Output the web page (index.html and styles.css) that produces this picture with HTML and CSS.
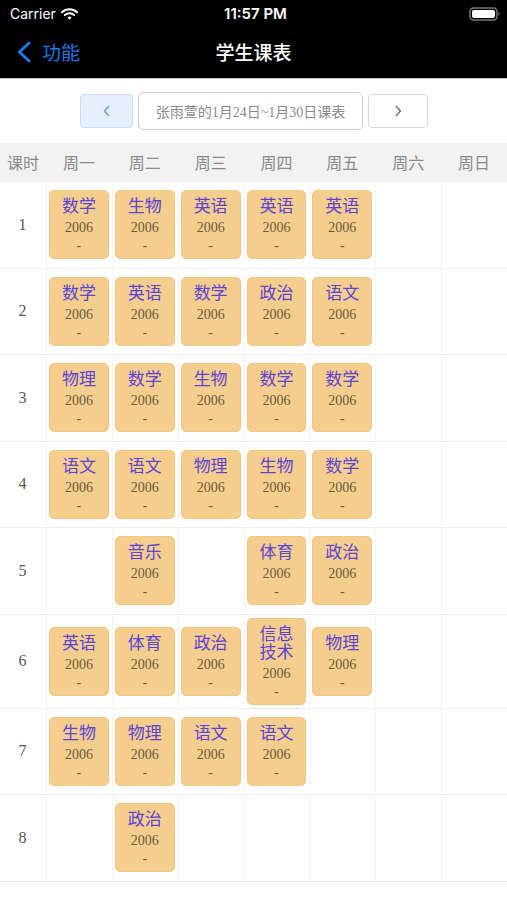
FILE: index.html
```html
<!DOCTYPE html>
<html lang="zh">
<head>
<meta charset="utf-8">
<title>学生课表</title>
<link rel="stylesheet" href="styles.css">
</head>
<body>
<div class="topbar">
  <div class="status">
    <div class="status-left">Carrier
      <svg class="wifi" width="17" height="12" viewBox="0 0 17 12"><path d="M1 4.2 A11 11 0 0 1 16 4.2" fill="none" stroke="#fff" stroke-width="2" stroke-linecap="round"/><path d="M3.8 7 A7 7 0 0 1 13.2 7" fill="none" stroke="#fff" stroke-width="2" stroke-linecap="round"/><path d="M6.4 9.6 L8.5 11.8 L10.6 9.6 A3 3 0 0 0 6.4 9.6 Z" fill="#fff"/></svg>
    </div>
    <div class="status-time">11:57 PM</div>
    <div class="status-right">
      <svg width="32" height="14" viewBox="0 0 32 14"><rect x="1" y="1" width="27" height="12" rx="3.5" fill="none" stroke="#777" stroke-width="1.5"/><rect x="3" y="3" width="23" height="8" rx="2" fill="#fff"/><path d="M29.5 5 L31 7 L29.5 9 Z" fill="#777"/></svg>
    </div>
  </div>
  <div class="navbar">
    <div class="nav-back">
      <svg width="16" height="22" viewBox="0 0 16 22"><path d="M13 2 L3.5 11 L13 20" fill="none" stroke="#1a7ae6" stroke-width="3" stroke-linecap="round" stroke-linejoin="round"/></svg>
      <span>功能</span>
    </div>
    <div class="nav-title">学生课表</div>
  </div>
</div>

<div class="week-bar">
  <div class="week-btn prev">
    <svg width="8" height="12" viewBox="0 0 8 12"><path d="M6 1 L1.5 6 L6 11" fill="none" stroke="#5a98dc" stroke-width="1.2"/></svg>
  </div>
  <div class="week-label">张雨萱的1月24日~1月30日课表</div>
  <div class="week-btn next">
    <svg width="8" height="12" viewBox="0 0 8 12"><path d="M2 1 L6.5 6 L2 11" fill="none" stroke="#666" stroke-width="1.2"/></svg>
  </div>
</div>

<div class="timetable">
  <div class="th">课时</div><div class="th">周一</div><div class="th">周二</div><div class="th">周三</div><div class="th">周四</div><div class="th">周五</div><div class="th">周六</div><div class="th">周日</div>

  <div class="td num">1</div>
  <div class="td"><div class="card"><div class="subj">数学</div><div class="room">2006</div><div class="dash">-</div></div></div>
  <div class="td"><div class="card"><div class="subj">生物</div><div class="room">2006</div><div class="dash">-</div></div></div>
  <div class="td"><div class="card"><div class="subj">英语</div><div class="room">2006</div><div class="dash">-</div></div></div>
  <div class="td"><div class="card"><div class="subj">英语</div><div class="room">2006</div><div class="dash">-</div></div></div>
  <div class="td"><div class="card"><div class="subj">英语</div><div class="room">2006</div><div class="dash">-</div></div></div>
  <div class="td"></div><div class="td"></div>

  <div class="td num">2</div>
  <div class="td"><div class="card"><div class="subj">数学</div><div class="room">2006</div><div class="dash">-</div></div></div>
  <div class="td"><div class="card"><div class="subj">英语</div><div class="room">2006</div><div class="dash">-</div></div></div>
  <div class="td"><div class="card"><div class="subj">数学</div><div class="room">2006</div><div class="dash">-</div></div></div>
  <div class="td"><div class="card"><div class="subj">政治</div><div class="room">2006</div><div class="dash">-</div></div></div>
  <div class="td"><div class="card"><div class="subj">语文</div><div class="room">2006</div><div class="dash">-</div></div></div>
  <div class="td"></div><div class="td"></div>

  <div class="td num">3</div>
  <div class="td"><div class="card"><div class="subj">物理</div><div class="room">2006</div><div class="dash">-</div></div></div>
  <div class="td"><div class="card"><div class="subj">数学</div><div class="room">2006</div><div class="dash">-</div></div></div>
  <div class="td"><div class="card"><div class="subj">生物</div><div class="room">2006</div><div class="dash">-</div></div></div>
  <div class="td"><div class="card"><div class="subj">数学</div><div class="room">2006</div><div class="dash">-</div></div></div>
  <div class="td"><div class="card"><div class="subj">数学</div><div class="room">2006</div><div class="dash">-</div></div></div>
  <div class="td"></div><div class="td"></div>

  <div class="td num">4</div>
  <div class="td"><div class="card"><div class="subj">语文</div><div class="room">2006</div><div class="dash">-</div></div></div>
  <div class="td"><div class="card"><div class="subj">语文</div><div class="room">2006</div><div class="dash">-</div></div></div>
  <div class="td"><div class="card"><div class="subj">物理</div><div class="room">2006</div><div class="dash">-</div></div></div>
  <div class="td"><div class="card"><div class="subj">生物</div><div class="room">2006</div><div class="dash">-</div></div></div>
  <div class="td"><div class="card"><div class="subj">数学</div><div class="room">2006</div><div class="dash">-</div></div></div>
  <div class="td"></div><div class="td"></div>

  <div class="td num">5</div>
  <div class="td"></div>
  <div class="td"><div class="card"><div class="subj">音乐</div><div class="room">2006</div><div class="dash">-</div></div></div>
  <div class="td"></div>
  <div class="td"><div class="card"><div class="subj">体育</div><div class="room">2006</div><div class="dash">-</div></div></div>
  <div class="td"><div class="card"><div class="subj">政治</div><div class="room">2006</div><div class="dash">-</div></div></div>
  <div class="td"></div><div class="td"></div>

  <div class="td num">6</div>
  <div class="td"><div class="card"><div class="subj">英语</div><div class="room">2006</div><div class="dash">-</div></div></div>
  <div class="td"><div class="card"><div class="subj">体育</div><div class="room">2006</div><div class="dash">-</div></div></div>
  <div class="td"><div class="card"><div class="subj">政治</div><div class="room">2006</div><div class="dash">-</div></div></div>
  <div class="td"><div class="card"><div class="subj">信息技术</div><div class="room">2006</div><div class="dash">-</div></div></div>
  <div class="td"><div class="card"><div class="subj">物理</div><div class="room">2006</div><div class="dash">-</div></div></div>
  <div class="td"></div><div class="td"></div>

  <div class="td num">7</div>
  <div class="td"><div class="card"><div class="subj">生物</div><div class="room">2006</div><div class="dash">-</div></div></div>
  <div class="td"><div class="card"><div class="subj">物理</div><div class="room">2006</div><div class="dash">-</div></div></div>
  <div class="td"><div class="card"><div class="subj">语文</div><div class="room">2006</div><div class="dash">-</div></div></div>
  <div class="td"><div class="card"><div class="subj">语文</div><div class="room">2006</div><div class="dash">-</div></div></div>
  <div class="td"></div>
  <div class="td"></div><div class="td"></div>

  <div class="td num">8</div>
  <div class="td"></div>
  <div class="td"><div class="card"><div class="subj">政治</div><div class="room">2006</div><div class="dash">-</div></div></div>
  <div class="td"></div>
  <div class="td"></div>
  <div class="td"></div>
  <div class="td"></div><div class="td"></div>
</div>
</body>
</html>
```

FILE: styles.css
```css
* { box-sizing: border-box; }
html, body { margin: 0; padding: 0; background: #fff; }
body {
  width: 507px;
  font-family: "Noto Sans CJK SC", sans-serif;
}

.topbar {
  background: #000;
  border-bottom: 1px solid #c9c9c9;
}
.status {
  height: 27px;
  display: flex;
  align-items: center;
  justify-content: space-between;
  padding: 0 6px 0 10px;
  color: #fff;
}
.status-left {
  display: flex;
  align-items: center;
  gap: 5px;
  font-family: "Inter", "Liberation Sans", sans-serif;
  font-size: 14px;
  width: 120px;
}
.status-time {
  font-family: "Inter", "Liberation Sans", sans-serif;
  font-weight: 600;
  font-size: 15px;
}
.status-right {
  width: 120px;
  display: flex;
  justify-content: flex-end;
}
.status-right svg { display: block; }

.navbar {
  height: 51px;
  display: grid;
  grid-template-columns: 1fr auto 1fr;
  align-items: center;
  padding-bottom: 2px;
}
.nav-back {
  display: flex;
  align-items: center;
  gap: 10px;
  padding-left: 16px;
  color: #1a7ae6;
  font-size: 19px;
}
.nav-back svg { display: block; }
.nav-title {
  color: #fff;
  font-size: 19px;
  font-weight: 500;
}

.week-bar {
  height: 64px;
  display: flex;
  align-items: center;
  justify-content: center;
  gap: 5px;
  padding-left: 1px;
}
.week-btn {
  height: 34px;
  border-radius: 4px;
  display: flex;
  align-items: center;
  justify-content: center;
}
.week-btn svg { display: block; }
.week-btn.prev {
  width: 53px;
  background: #e6f0fc;
  border: 1px solid #c8dcf3;
}
.week-btn.next {
  width: 60px;
  background: #fff;
  border: 1px solid #d8d8d8;
}
.week-label {
  height: 38px;
  width: 225px;
  border: 1px solid #cfcfcf;
  border-radius: 5px;
  display: flex;
  align-items: center;
  justify-content: center;
  font-family: "Liberation Serif", "Noto Sans CJK SC", serif;
  font-size: 14px;
  color: #8a8a8a;
  white-space: nowrap;
}

.timetable {
  display: grid;
  grid-template-columns: 46px repeat(7, 1fr);
  border-bottom: 1px solid #e6e6e6;
}
.th {
  height: 38px;
  background: #f2f2f2;
  display: flex;
  align-items: center;
  justify-content: center;
  font-size: 16px;
  color: #8a8a8a;
}
.td {
  min-height: 86.5px;
  padding: 3px 3px 3px 2px;
  border-top: 1px solid #ececec;
  border-left: 1px solid #f5f5f5;
  display: flex;
  flex-direction: column;
  justify-content: center;
}
.td.num {
  border-left: none;
  align-items: center;
  font-family: "Liberation Serif", serif;
  font-size: 16px;
  color: #555;
}
.card {
  background: #f5cd8c;
  border: 1px solid #efc684;
  border-radius: 5px;
  padding: 5px 9px 4px;
  text-align: center;
}
.subj {
  font-size: 17px;
  line-height: 18px;
  color: #5a45d6;
}
.room {
  margin-top: 4px;
  font-family: "Liberation Serif", serif;
  font-size: 14px;
  line-height: 20px;
  color: #6c5a42;
}
.dash {
  font-family: "Liberation Serif", serif;
  font-size: 14px;
  line-height: 16px;
  color: #6c5a42;
}
```
